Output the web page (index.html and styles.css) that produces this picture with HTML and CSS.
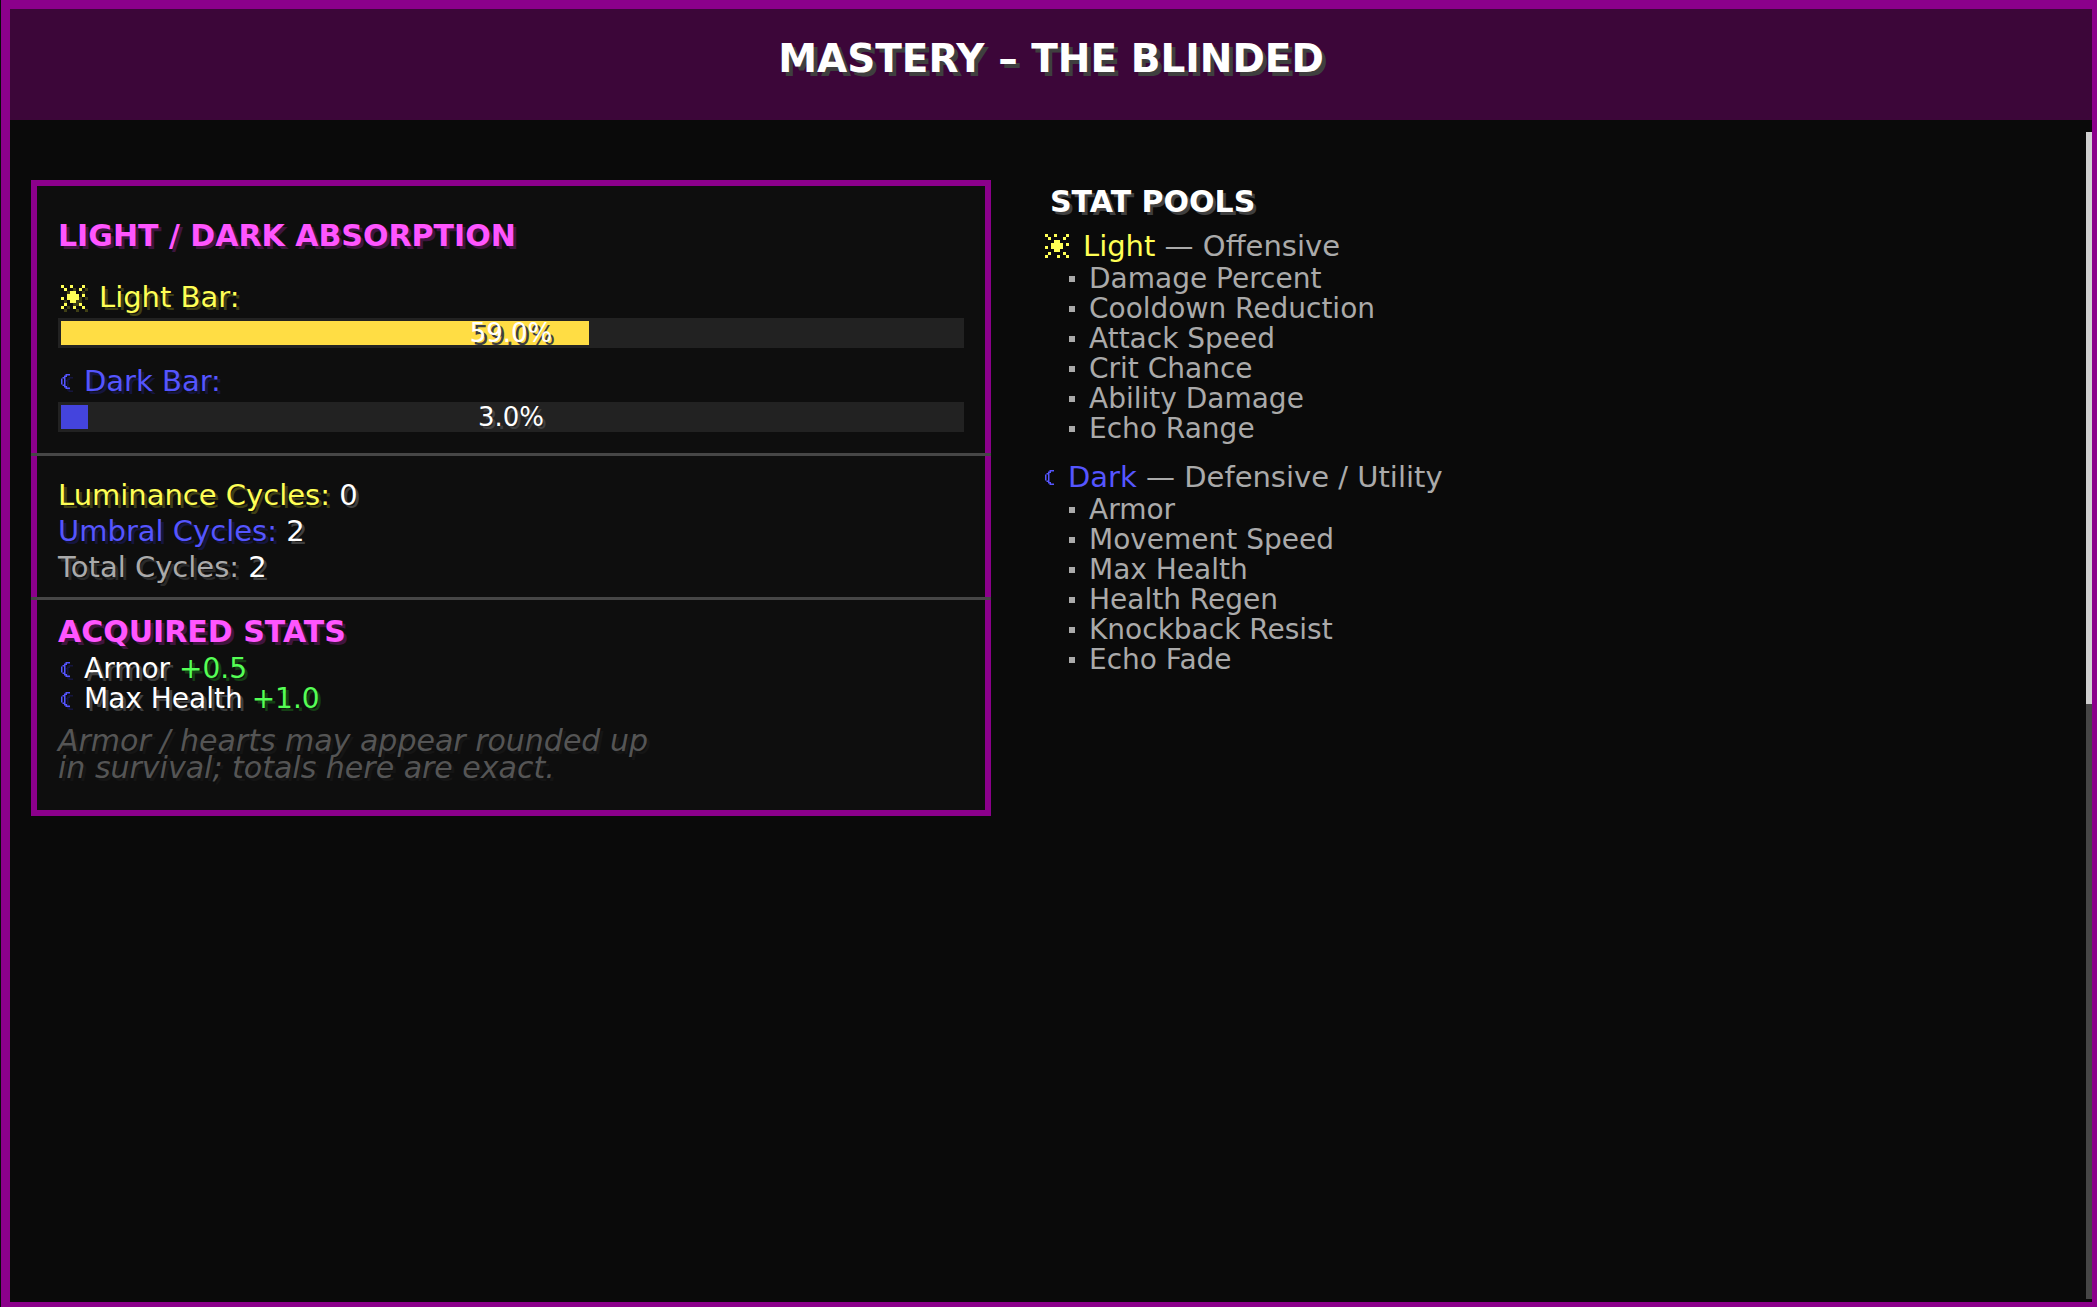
FILE: index.html
```html
<!DOCTYPE html>
<html lang="en">
<head>
<meta charset="utf-8">
<title>Mastery – The Blinded</title>
<link rel="stylesheet" href="styles.css">
</head>
<body>
<svg class="sprites" aria-hidden="true">
  <symbol id="sun" viewBox="0 0 8 8"><path d="M0 0h1v1H0zM3 0h1v1H3zM7 0h1v1H7zM1 1h1v1H1zM6 1h1v1H6zM3 2h2v1h1v2H5v1H3V5H2V3h1zM7 3h1v1H7zM0 4h1v1H0zM1 6h1v1H1zM6 6h1v1H6zM0 7h1v1H0zM4 7h1v1H4zM7 7h1v1H7z"/></symbol>
  <symbol id="moon" viewBox="0 0 6 10"><path d="M3 0h3v1H4v1H3v6h1v1h2v1H3V9H2V8H1V7H0V3h1V2h1V1h1zM1 3v4h1V3z" fill-rule="evenodd"/></symbol>
</svg>
<div class="window">
  <header class="titlebar"><h1>MASTERY – THE BLINDED</h1></header>
  <div class="viewport">
    <main class="content">
      <section class="card">
        <div class="section absorption">
          <h2 class="pink">LIGHT / DARK ABSORPTION</h2>
          <p class="label yellow"><svg class="icon sun"><use href="#sun"/></svg>Light Bar:</p>
          <div class="bar" role="img" aria-label="Light 59.0%"><div class="fill light" style="width: 58.67%"></div><span>59.0%</span></div>
          <p class="label blue"><svg class="icon moon"><use href="#moon"/></svg>Dark Bar:</p>
          <div class="bar" role="img" aria-label="Dark 3.0%"><div class="fill dark" style="width: 3%"></div><span>3.0%</span></div>
        </div>
        <hr>
        <div class="section cycles">
          <p class="yellow">Luminance Cycles: <span class="white">0</span></p>
          <p class="blue">Umbral Cycles: <span class="white">2</span></p>
          <p class="gray">Total Cycles: <span class="white">2</span></p>
        </div>
        <hr>
        <div class="section acquired">
          <h2 class="pink">ACQUIRED STATS</h2>
          <ul>
            <li class="label blue"><svg class="icon moon"><use href="#moon"/></svg><span class="white">Armor <span class="green">+0.5</span></span></li>
            <li class="label blue"><svg class="icon moon"><use href="#moon"/></svg><span class="white">Max Health <span class="green">+1.0</span></span></li>
          </ul>
          <p class="note">Armor / hearts may appear rounded up<br>in survival; totals here are exact.</p>
        </div>
      </section>
      <section class="pools">
        <h2 class="white">STAT POOLS</h2>
        <h3 class="label yellow"><svg class="icon sun"><use href="#sun"/></svg><span>Light <span class="gray">— Offensive</span></span></h3>
        <ul class="stats gray">
          <li>Damage Percent</li>
          <li>Cooldown Reduction</li>
          <li>Attack Speed</li>
          <li>Crit Chance</li>
          <li>Ability Damage</li>
          <li>Echo Range</li>
        </ul>
        <h3 class="label blue"><svg class="icon moon"><use href="#moon"/></svg><span>Dark <span class="gray">— Defensive / Utility</span></span></h3>
        <ul class="stats gray">
          <li>Armor</li>
          <li>Movement Speed</li>
          <li>Max Health</li>
          <li>Health Regen</li>
          <li>Knockback Resist</li>
          <li>Echo Fade</li>
        </ul>
      </section>
    </main>
    <div class="scrollbar"><div class="thumb"></div></div>
  </div>
</div>
</body>
</html>
```
FILE: styles.css
```css
* { box-sizing: border-box; }

body {
  margin: 0;
  background: #0a0a0a;
  font: 28px/30px "DejaVu Sans", sans-serif;
}

h1, h2, h3, p, ul { margin: 0; padding: 0; }
ul { list-style: none; }
.sprites { display: none; }

/* Text colours, each with its drop shadow */
.white { color: #fff; --shadow: #3f3f3f; }
.yellow { color: #ff5; --shadow: #3f3f15; }
.blue { color: #55f; --shadow: #15153f; }
.pink { color: #f5f; --shadow: #3f153f; }
.gray { color: #aaa; --shadow: #2a2a2a; }
.green { color: #5f5; --shadow: #153f15; }
.white, .yellow, .blue, .pink, .gray, .green { text-shadow: 3px 3px 0 var(--shadow); }

.window {
  display: flex;
  flex-direction: column;
  min-height: 100vh;
  margin-left: 1px;
  border: solid #8b008b;
  border-width: 9px 5px 5px 9px;
}

.titlebar {
  padding: 26px 0 37px;
  background: #3c0639;
  text-align: center;
}
h1 {
  color: #fff;
  font-size: 39px;
  line-height: 48px;
  text-shadow: 4px 4px 0 #3f3f3f;
}

.viewport { flex: 1; display: flex; padding: 12px 0 3px; }
.content {
  flex: 1;
  display: grid;
  grid-template-columns: 960fr 1041fr;
  column-gap: 54px;
  align-items: start;
  padding: 48px 0 48px 21px;
}
.scrollbar { width: 6px; background: #464646; }
.thumb { height: 49%; background: #d0d0d0; }

h2 { font-size: 30px; line-height: 30px; }
h3 { font-size: 29px; font-weight: normal; }

.card { border: 6px solid #8b008b; background: #0e0e0e; }
.section { padding-left: 21px; padding-right: 21px; }
hr {
  height: 3px;
  margin: 0 -6px;
  border: 0;
  background: #464646;
}

.label { display: flex; gap: 14px; }
.icon {
  flex: none;
  fill: currentColor;
  filter: drop-shadow(3px 3px 0 var(--shadow));
}
.sun { width: 24px; height: 24px; margin-top: 3px; }
.moon { width: 9px; height: 15px; margin-top: 8px; }

.absorption { padding-top: 35px; padding-bottom: 21px; }
.absorption .label { margin: 18px 0 6px; padding-left: 3px; font-size: 29px; }
.absorption h2 + .label { margin-top: 31px; }
.bar {
  display: grid;
  align-items: center;
  height: 30px;
  padding: 3px;
  background: #222;
}
.bar > * { grid-area: 1 / 1; }
.bar span {
  color: #fff;
  font-size: 26px;
  line-height: 24px;
  text-align: center;
  text-shadow: 3px 3px 0 #3f3f3f;
}
.fill { height: 24px; }
.light { background: #ffdd44; }
.dark { background: #4444dd; }

.cycles { padding-top: 21px; padding-bottom: 12px; font-size: 29px; line-height: 36px; }
.acquired { padding-top: 17px; padding-bottom: 29px; }
.acquired ul { margin: 7px 0 13px; padding-left: 3px; }
.note {
  color: #555;
  font-size: 30px;
  font-style: italic;
  line-height: 27px;
  text-shadow: 3px 3px 0 #151515;
}

.pools { padding-top: 7px; }
.pools h2 { margin: 0 0 14px 5px; }
.pools .gray, .pools .label { text-shadow: none; }
.pools .icon { filter: none; }
.stats { margin: 3px 0 18px; padding-left: 24px; }
.stats li { display: flex; gap: 14px; }
.stats li::before {
  content: "";
  width: 6px;
  height: 6px;
  margin-top: 12px;
  background: currentColor;
}
```
